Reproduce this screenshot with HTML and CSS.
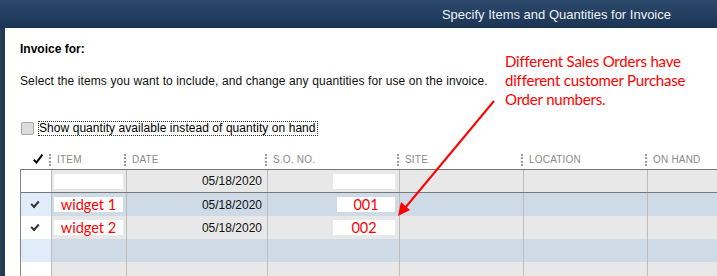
FILE: index.html
```html
<html lang="en">

<head>
    <title>Specify Items and Quantities for Invoice</title>
    <link rel="stylesheet" href="styles.css">
</head>

<body>
    <div class="window">
        <div class="titlebar">Specify Items and Quantities for Invoice</div>
        <div class="frame">
            <div class="edge"></div>
            <div class="content">
                <h1 class="heading">Invoice for:</h1>
                <p class="intro">Select the items you want to include, and change any quantities for use on the invoice.</p>
                <div class="option">
                    <span class="box"></span>
                    <label class="focus">Show quantity available instead of quantity on hand</label>
                </div>

                <div class="grid head">
                    <div class="hcell tick">
                        <svg width="10" height="10" viewBox="0 0 10 10"><path d="M0.8 5.6 L3.4 8.6 L9.4 0.6" fill="none" stroke="#000" stroke-width="1.9"/></svg>
                    </div>
                    <div class="hcell sep">ITEM</div>
                    <div class="hcell sep">DATE</div>
                    <div class="hcell sep">S.O. NO.</div>
                    <div class="hcell sep">SITE</div>
                    <div class="hcell sep">LOCATION</div>
                    <div class="hcell sep">ON HAND</div>
                </div>

                <div class="table">
                    <div class="grid row grey current">
                        <div class="cell first"></div>
                        <div class="cell"><span class="field item"></span></div>
                        <div class="cell date">05/18/2020</div>
                        <div class="cell so"><span class="field num wide"></span></div>
                        <div class="cell"></div>
                        <div class="cell"></div>
                        <div class="cell"></div>
                    </div>
                    <div class="grid row blue">
                        <div class="cell first"><span class="mark"></span></div>
                        <div class="cell"><span class="field item red">widget 1</span></div>
                        <div class="cell date">05/18/2020</div>
                        <div class="cell so"><span class="field num red">001</span></div>
                        <div class="cell"></div>
                        <div class="cell"></div>
                        <div class="cell"></div>
                    </div>
                    <div class="grid row grey">
                        <div class="cell first"><span class="mark"></span></div>
                        <div class="cell"><span class="field item red">widget 2</span></div>
                        <div class="cell date">05/18/2020</div>
                        <div class="cell so"><span class="field num wide red">002</span></div>
                        <div class="cell"></div>
                        <div class="cell"></div>
                        <div class="cell"></div>
                    </div>
                    <div class="grid row blue">
                        <div class="cell first"></div>
                        <div class="cell"></div>
                        <div class="cell"></div>
                        <div class="cell"></div>
                        <div class="cell"></div>
                        <div class="cell"></div>
                        <div class="cell"></div>
                    </div>
                    <div class="grid row grey">
                        <div class="cell first"></div>
                        <div class="cell"></div>
                        <div class="cell"></div>
                        <div class="cell"></div>
                        <div class="cell"></div>
                        <div class="cell"></div>
                        <div class="cell"></div>
                    </div>
                </div>
            </div>
        </div>

        <!-- callout drawn over the dialog -->
        <div class="note">Different Sales Orders have<br>different customer Purchase<br>Order numbers.</div>
        <svg class="arrow" width="717" height="276" viewBox="0 0 717 276">
            <line x1="494" y1="101" x2="405" y2="208" stroke="#f00" stroke-width="2"/>
            <polygon points="398,216 401,202 410,210" fill="#f00"/>
        </svg>
    </div>
</body>

</html>
```

FILE: styles.css
```css
body {
    margin: 0;
    width: 717px;
    height: 276px;
    overflow: hidden;
    font-family: "Liberation Sans", Arial, sans-serif;
    background: #fff;
}

.window {
    position: relative;
    display: flex;
    flex-direction: column;
    height: 276px;
}

.titlebar {
    height: 28px;
    line-height: 30px;
    flex: none;
    background: linear-gradient(#2b4a6c, #1c3454);
    color: #eef2f7;
    font-size: 13px;
    text-align: right;
    padding-right: 46px;
}

.frame {
    display: flex;
    flex: 1;
}

.edge {
    width: 4px;
    flex: none;
    background: #1e3a5c;
    border-left: 1px solid #3a3a3a;
}

.content {
    flex: 1;
    padding-left: 15px;
    overflow: hidden;
}

.heading {
    margin: 14px 0 0;
    font-size: 12px;
    line-height: 14px;
    font-weight: bold;
    color: #000;
}

.intro {
    margin: 18px 0 0;
    font-size: 12px;
    line-height: 14px;
    color: #111;
    letter-spacing: 0.1px;
}

.option {
    display: flex;
    align-items: center;
    margin-top: 33px;
    height: 15px;
}

.box {
    width: 11px;
    height: 11px;
    margin-left: 1px;
    background: #dcdcdc;
    border: 1px solid #a8a8a8;
    border-radius: 2px;
}

.focus {
    margin-left: 4px;
    font-size: 12px;
    line-height: 13px;
    color: #000;
    letter-spacing: 0.06px;
    border: 1px dotted #333;
    padding: 0 1px 0 0;
}

.grid {
    display: grid;
    grid-template-columns: 30px 75px 141px 132px 124px 124px 100px;
}

.head {
    margin-top: 16px;
    height: 16px;
    align-items: center;
}

.hcell {
    font-size: 10px;
    color: #8a8a8a;
    letter-spacing: 0.2px;
    padding-left: 6px;
    height: 12px;
    line-height: 12px;
}

.tick {
    padding-left: 13px;
}

.sep {
    border-left: 2px dotted #999;
    margin-left: -1px;
}

.table {
    border-top: 1px solid #777;
    border-left: 1px solid #888;
    margin-top: 1px;
}

.row {
    height: 23px;
}

.row.current {
    height: 22px;
    border-bottom: 1px solid #777;
}

.cell {
    border-left: 1px solid #bcbcbc;
    display: flex;
    align-items: center;
    font-size: 12px;
    color: #111;
}

.cell.first {
    border-left: none;
    justify-content: center;
}

.grey .cell {
    background: #e8e8e8;
}

.grey .cell.first {
    background: #fff;
}

.blue .cell {
    background: #cfdae7;
}

.blue .cell.first {
    background: #e1ecfa;
}

.date {
    justify-content: flex-end;
    padding-right: 5px;
}

.so {
    justify-content: flex-end;
    padding-right: 4px;
}

.field {
    background: #fff;
    height: 15px;
    line-height: 15px;
    display: inline-block;
    text-align: center;
    font-family: Lato, "Open Sans", sans-serif;
    font-size: 14.5px;
}

.item {
    width: 69px;
    margin-left: 2px;
}

.num {
    width: 58px;
}

.num.wide {
    width: 62px;
}

.red {
    color: #f00;
}

.mark {
    width: 6px;
    height: 3px;
    border-left: 2px solid #333;
    border-bottom: 2px solid #333;
    transform: rotate(-48deg);
    margin-top: -2px;
    margin-left: -2px;
}

.note {
    position: absolute;
    left: 505px;
    top: 52px;
    font-family: Lato, "Open Sans", sans-serif;
    font-size: 15px;
    line-height: 19px;
    letter-spacing: -0.2px;
    color: #f00;
}

.arrow {
    position: absolute;
    left: 0;
    top: 0;
}
```
